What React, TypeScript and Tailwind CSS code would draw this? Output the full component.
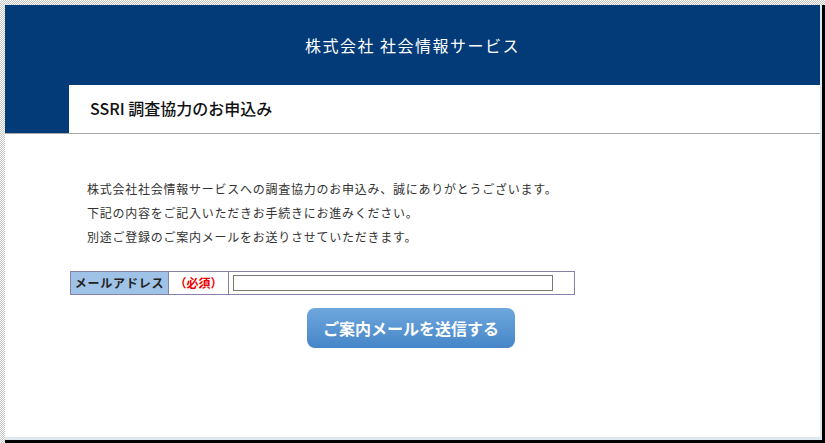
import React from "react";

export default function App() {
  return (
    <div
      className="w-[825px] h-[443px] overflow-hidden bg-[repeating-conic-gradient(#c8c8c8_0_25%,#ffffff_0_50%)] bg-[length:2px_2px] pt-[5px] pl-[5px] flex"
      style={{ fontFamily: '"Noto Sans CJK JP", "Noto Sans", sans-serif' }}
    >
      <div className="flex-1 flex flex-col border-r-[3px] border-b-[3px] border-black">
        <div className="flex-1 flex flex-col bg-white border-r-[2px] border-b-[3px] border-[#dfe7ef]">
          {/* top band */}
          <div className="h-[80px] bg-[#023b78] flex items-center justify-center">
            <span className="text-white text-[16px] tracking-[1.5px] leading-none">
              株式会社 社会情報サービス
            </span>
          </div>
          {/* title row */}
          <div className="flex h-[49px] border-b border-[#a8a8a8]">
            <div className="w-[64px] bg-[#023b78]" />
            <div className="flex-1 flex items-center pl-[21px] pb-[2px]">
              <span className="text-[16px] font-medium text-[#111] leading-none">
                SSRI 調査協力のお申込み
              </span>
            </div>
          </div>
          {/* body */}
          <div className="pt-[43px] pl-[82px] text-[12px] leading-[24px] tracking-[0.75px] text-[#333]">
            <p>株式会社社会情報サービスへの調査協力のお申込み、誠にありがとうございます。</p>
            <p>下記の内容をご記入いただきお手続きにお進みください。</p>
            <p>別途ご登録のご案内メールをお送りさせていただきます。</p>
          </div>
          <div className="pl-[65px] mt-[22px]">
            <div className="flex w-[505px] h-[24px] border border-[#8880a8]">
              <div className="w-[98px] bg-[#9fc3e6] flex items-center justify-center border-r border-[#8880a8] text-[12px] font-bold text-[#222] tracking-[0.8px]">
                メールアドレス
              </div>
              <div className="w-[60px] flex items-center justify-center border-r border-[#8880a8] text-[12px] font-bold text-[#ee0000]">
                （必須）
              </div>
              <div className="flex-1 flex items-center pl-[4px]">
                <input
                  type="text"
                  className="w-[320px] h-[16px] border border-[#777] bg-white outline-none"
                />
              </div>
            </div>
          </div>
          <div className="pl-[302px] mt-[13px]">
            <button className="w-[208px] h-[40px] rounded-[8px] bg-gradient-to-b from-[#6ea7dd] to-[#4686c8] text-white text-[16px] font-bold leading-none">
              ご案内メールを送信する
            </button>
          </div>
        </div>
      </div>
    </div>
  );
}
